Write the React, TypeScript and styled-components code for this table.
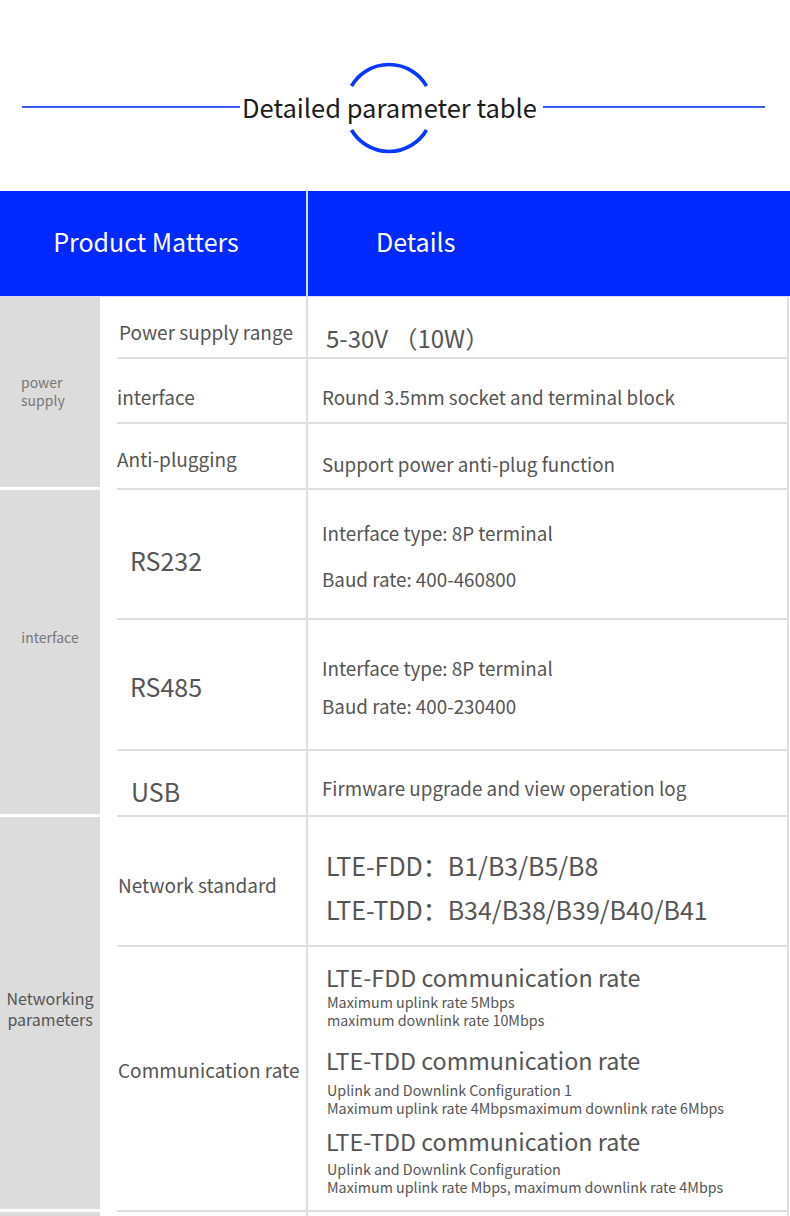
import React from "react";
import styled, { createGlobalStyle } from "styled-components";

const Global = createGlobalStyle`
  html, body { margin: 0; padding: 0; background: #fff; }
  body { font-family: "Noto Sans CJK SC", "Noto Sans", sans-serif; }
  * { box-sizing: border-box; }
`;

const Page = styled.div`
  width: 790px;
  height: 1216px;
  overflow: hidden;
  background: #fff;
`;

const TitleBar = styled.header`
  height: 191px;
  display: flex;
  align-items: center;
  padding: 22px 25px 0 22px;
`;

const TitleLine = styled.div<{ $grow: number }>`
  flex: ${(p) => p.$grow};
  height: 2px;
  background: #3d5df2;
`;

const TitleWrap = styled.div`
  position: relative;
  margin: 0 6px 0 2px;
`;

const TitleText = styled.h1`
  position: relative;
  margin: 0;
  font-size: 25.5px;
  font-weight: 400;
  color: #1c1c1c;
  line-height: 34px;
  white-space: nowrap;
`;

const Ring = styled.svg`
  position: absolute;
  left: 50%;
  top: 50%;
  width: 92px;
  height: 92px;
  margin: -45px 0 0 -46px;
`;

const HeadRow = styled.div`
  display: grid;
  grid-template-columns: 306px 2px 1fr;
  height: 106px;
  background: #0029ff;
  border-bottom: 1px solid #d8dcf5;
`;

const HeadCell = styled.div<{ $pad?: number }>`
  display: flex;
  align-items: center;
  justify-content: ${(p) => (p.$pad ? "flex-start" : "center")};
  padding-left: ${(p) => (p.$pad ? `${p.$pad}px` : "0")};
  padding-right: ${(p) => (p.$pad ? "0" : "14px")};
  color: #fff;
  font-size: 25px;
  padding-bottom: 6px;
`;

const HeadDivider = styled.div`
  background: #d9dcef;
`;

const Group = styled.section`
  display: grid;
  grid-template-columns: 100px 1fr;
  column-gap: 17px;
`;

const Category = styled.div<{
  $size: number;
  $color: string;
  $align: "left" | "center";
  $pl: number;
  $lift: number;
}>`
  background: #dcdcdc;
  border-bottom: 3px solid #fff;
  display: flex;
  flex-direction: column;
  justify-content: center;
  align-items: ${(p) => (p.$align === "left" ? "flex-start" : "center")};
  text-align: ${(p) => p.$align};
  padding-left: ${(p) => p.$pl}px;
  padding-bottom: ${(p) => p.$lift}px;
  font-size: ${(p) => p.$size}px;
  line-height: ${(p) => Math.round(p.$size * 1.3)}px;
  color: ${(p) => p.$color};
`;

const Rows = styled.div`
  display: flex;
  flex-direction: column;
  margin-right: 1px;
`;

const Row = styled.div<{ $h: number }>`
  display: grid;
  grid-template-columns: 191px 1fr;
  height: ${(p) => p.$h}px;
  border-bottom: 2px solid #dedede;
`;

const Label = styled.div<{ $indent?: number; $size?: number; $shift?: number }>`
  border-right: 2px solid #dedede;
  display: flex;
  align-items: center;
  padding-left: ${(p) => p.$indent ?? 0}px;
  padding-top: ${(p) => Math.max(p.$shift ?? 0, 0)}px;
  padding-bottom: ${(p) => Math.max(-(p.$shift ?? 0), 0)}px;
  font-size: ${(p) => p.$size ?? 19}px;
  color: #555;
  white-space: nowrap;
`;

const Detail = styled.div<{ $shift?: number; $gap?: number }>`
  border-right: 2px solid #dedede;
  display: flex;
  flex-direction: column;
  justify-content: center;
  gap: ${(p) => p.$gap ?? 0}px;
  padding-left: 14px;
  padding-top: ${(p) => Math.max(p.$shift ?? 0, 0)}px;
  padding-bottom: ${(p) => Math.max(-(p.$shift ?? 0), 0)}px;
  color: #555;
  white-space: nowrap;
`;

const Text = styled.div<{ $size?: number; $lh?: number; $indent?: number }>`
  font-size: ${(p) => p.$size ?? 18.8}px;
  line-height: ${(p) => p.$lh ?? Math.round((p.$size ?? 19) * 1.4)}px;
  padding-left: ${(p) => p.$indent ?? 0}px;
`;

const RateBlock = styled.div<{ $mb: number; $gap: number }>`
  display: flex;
  flex-direction: column;
  margin-bottom: ${(p) => p.$mb}px;
  padding-left: 4px;
  & > div:first-child {
    margin-bottom: ${(p) => p.$gap}px;
  }
`;

const RateTitle = styled.div`
  font-size: 23.3px;
  line-height: 30px;
`;

const RateNote = styled.div`
  font-size: 14.3px;
  line-height: 17.5px;
  padding-left: 1px;
`;

export default function App() {
  return (
    <Page>
      <Global />
      <TitleBar>
        <TitleLine $grow={218} />
        <TitleWrap>
          <Ring viewBox="0 0 92 92">
            <path
              d="M8.5 24 A43.5 43.5 0 0 1 83.5 24"
              fill="none"
              stroke="#0a37ff"
              strokeWidth="3.6"
            />
            <path
              d="M8.5 68 A43.5 43.5 0 0 0 83.5 68"
              fill="none"
              stroke="#0a37ff"
              strokeWidth="3.6"
            />
          </Ring>
          <TitleText>Detailed parameter table</TitleText>
        </TitleWrap>
        <TitleLine $grow={222} />
      </TitleBar>

      <HeadRow>
        <HeadCell>Product Matters</HeadCell>
        <HeadDivider />
        <HeadCell $pad={68}>Details</HeadCell>
      </HeadRow>

      <Group>
        <Category $size={14} $color="#777" $align="left" $pl={21} $lift={2}>
          <span>power</span>
          <span>supply</span>
        </Category>
        <Rows>
          <Row $h={62}>
            <Label $indent={2} $shift={8}>Power supply range</Label>
            <Detail $shift={22}>
              <Text $size={24} $indent={4}>5-30V （10W）</Text>
            </Detail>
          </Row>
          <Row $h={65}>
            <Label $shift={12}>interface</Label>
            <Detail $shift={12}>
              <Text>Round 3.5mm socket and terminal block</Text>
            </Detail>
          </Row>
          <Row $h={66}>
            <Label $shift={4}>Anti-plugging</Label>
            <Detail $shift={14}>
              <Text>Support power anti-plug function</Text>
            </Detail>
          </Row>
        </Rows>
      </Group>

      <Group>
        <Category $size={14} $color="#777" $align="center" $pl={0} $lift={30}>
          <span>interface</span>
        </Category>
        <Rows>
          <Row $h={130}>
            <Label $indent={13} $size={25} $shift={12}>RS232</Label>
            <Detail $shift={2} $gap={19}>
              <Text>Interface type: 8P terminal</Text>
              <Text>Baud rate: 400-460800</Text>
            </Detail>
          </Row>
          <Row $h={131}>
            <Label $indent={13} $size={25} $shift={2}>RS485</Label>
            <Detail $shift={4} $gap={11}>
              <Text>Interface type: 8P terminal</Text>
              <Text>Baud rate: 400-230400</Text>
            </Detail>
          </Row>
          <Row $h={66}>
            <Label $indent={14} $size={25} $shift={16}>USB</Label>
            <Detail $shift={8}>
              <Text>Firmware upgrade and view operation log</Text>
            </Detail>
          </Row>
        </Rows>
      </Group>

      <Group>
        <Category $size={16} $color="#555" $align="center" $pl={0} $lift={8}>
          <span>Networking</span>
          <span>parameters</span>
        </Category>
        <Rows>
          <Row $h={130}>
            <Label $indent={1} $shift={6}>Network standard</Label>
            <Detail $shift={12} $gap={8}>
              <Text $size={25} $lh={36} $indent={4}>LTE-FDD：B1/B3/B5/B8</Text>
              <Text $size={25} $lh={36} $indent={4}>LTE-TDD：B34/B38/B39/B40/B41</Text>
            </Detail>
          </Row>
          <Row $h={265}>
            <Label $indent={1} $shift={-19}>Communication rate</Label>
            <Detail $shift={0}>
              <RateBlock $mb={17} $gap={1}>
                <RateTitle>LTE-FDD communication rate</RateTitle>
                <RateNote>Maximum uplink rate 5Mbps</RateNote>
                <RateNote>maximum downlink rate 10Mbps</RateNote>
              </RateBlock>
              <RateBlock $mb={10} $gap={6}>
                <RateTitle>LTE-TDD communication rate</RateTitle>
                <RateNote>Uplink and Downlink Configuration 1</RateNote>
                <RateNote>Maximum uplink rate 4Mbpsmaximum downlink rate 6Mbps</RateNote>
              </RateBlock>
              <RateBlock $mb={0} $gap={4}>
                <RateTitle>LTE-TDD communication rate</RateTitle>
                <RateNote>Uplink and Downlink Configuration</RateNote>
                <RateNote>Maximum uplink rate Mbps, maximum downlink rate 4Mbps</RateNote>
              </RateBlock>
            </Detail>
          </Row>
        </Rows>
      </Group>

      <Group>
        <Category $size={16} $color="#555" $align="center" $pl={0} $lift={0} />
        <Rows>
          <Row $h={80}>
            <Label />
            <Detail />
          </Row>
        </Rows>
      </Group>
    </Page>
  );
}
